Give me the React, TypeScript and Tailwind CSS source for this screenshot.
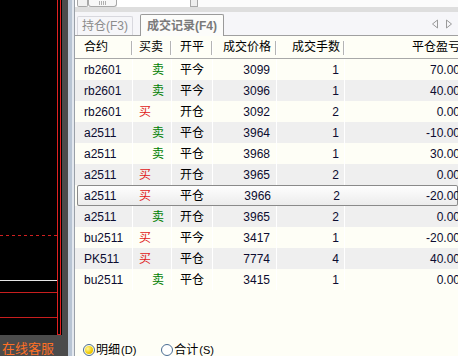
import React from 'react';

type Trade = {
  code: string;
  side: '买' | '卖';
  oc: string;
  price: string;
  qty: string;
  pnl: string;
};

const trades: Trade[] = [
  { code: 'rb2601', side: '卖', oc: '平今', price: '3099', qty: '1', pnl: '70.00' },
  { code: 'rb2601', side: '卖', oc: '平今', price: '3096', qty: '1', pnl: '40.00' },
  { code: 'rb2601', side: '买', oc: '开仓', price: '3092', qty: '2', pnl: '0.00' },
  { code: 'a2511', side: '卖', oc: '平仓', price: '3964', qty: '1', pnl: '-10.00' },
  { code: 'a2511', side: '卖', oc: '平仓', price: '3968', qty: '1', pnl: '30.00' },
  { code: 'a2511', side: '买', oc: '开仓', price: '3965', qty: '2', pnl: '0.00' },
  { code: 'a2511', side: '买', oc: '平仓', price: '3966', qty: '2', pnl: '-20.00' },
  { code: 'a2511', side: '卖', oc: '开仓', price: '3965', qty: '2', pnl: '0.00' },
  { code: 'bu2511', side: '买', oc: '平今', price: '3417', qty: '1', pnl: '-20.00' },
  { code: 'PK511', side: '买', oc: '平仓', price: '7774', qty: '4', pnl: '40.00' },
  { code: 'bu2511', side: '卖', oc: '平仓', price: '3415', qty: '1', pnl: '0.00' },
];

const SELECTED = 6;

const ChartStub: React.FC = () => (
  <svg width="62" height="335" className="block bg-black">
    <line x1="57.5" y1="0" x2="57.5" y2="334.5" stroke="#e02020" />
    <line x1="60.5" y1="0" x2="60.5" y2="334.5" stroke="#e02020" />
    <line x1="57" y1="334.5" x2="61" y2="334.5" stroke="#e02020" />
    <line x1="0" y1="235.5" x2="57" y2="235.5" stroke="#d02020" strokeDasharray="3 3" />
    <line x1="0" y1="280.5" x2="57" y2="280.5" stroke="#e6e6e6" />
    <line x1="0" y1="292.5" x2="57" y2="292.5" stroke="#c81e1e" />
    <line x1="0" y1="317.5" x2="57" y2="317.5" stroke="#c81e1e" />
  </svg>
);

const HeaderSep: React.FC = () => (
  <span className="absolute right-0 top-[5px] h-[14px] w-[2px] border-l border-[#b4b4b4] border-r border-r-white" />
);

const Radio: React.FC<{ checked?: boolean; label: string; hot: string }> = ({ checked, label, hot }) => (
  <div className="flex items-start">
    <span
      className={`h-[12px] w-[12px] rounded-full border border-[#4a6d93] flex items-center justify-center ${
        checked ? 'bg-[#fffce0]' : 'bg-white'
      }`}
    >
      {checked && (
        <span className="h-[8px] w-[8px] rounded-full bg-[radial-gradient(circle_at_35%_35%,#fff7a0,#f2cc00_60%,#d9a800)]" />
      )}
    </span>
    <span className="ml-[1px] text-[12px] leading-[12px] text-black">{label}</span>
    <span className="ml-[1px] text-[11px] leading-[12px] text-black">({hot})</span>
  </div>
);

export default function App() {
  return (
    <div className="flex h-[356px] w-[458px] overflow-hidden bg-black font-['Liberation_Sans','Noto_Sans_CJK_SC',sans-serif]">
      {/* chart stub on the left */}
      <div className="flex w-[62px] flex-col">
        <ChartStub />
        <div className="h-[21px] bg-[#4b4b4b] pl-[2px] pt-[7px] text-[13px] leading-none text-[#ff7025] whitespace-nowrap">
          在线客服
        </div>
      </div>
      <div className="w-[6px] bg-[#4b4b4b]" />
      <div className="w-[4px] bg-[#b9c5d4]" />
      <div className="w-[2px] bg-[#e3e8ef]" />
      <div className="w-px bg-[#9aa0a8]" />

      {/* trade panel */}
      <div className="flex min-w-0 flex-1 flex-col overflow-hidden bg-[#fefef6]">
        {/* clipped scrollbar */}
        <div className="flex h-[7px] bg-white">
          <div className="ml-[2px] h-[7px] w-[11px] rounded-b-[2px] border border-t-0 border-[#a8a8a8] bg-[#f2f2f2]" />
          <div className="h-[7px] w-[29px] rounded-b-[3px] border border-t-0 border-[#a8a8a8] bg-[#f8f8f8] flex justify-center gap-[1px] pt-[1px]">
            <span className="h-[4px] w-px bg-[#b0b0b0]" />
            <span className="h-[4px] w-px bg-[#b0b0b0]" />
            <span className="h-[4px] w-px bg-[#b0b0b0]" />
            <span className="h-[4px] w-px bg-[#b0b0b0]" />
          </div>
          <div className="ml-[73px] h-[7px] w-[8px] border border-t-0 border-[#a8a8a8] bg-[#eeeeee]" />
          <div className="flex-1 bg-[#fbfbfb]" />
        </div>
        <div className="h-[5px] bg-[#dedede]" />

        {/* tabs */}
        <div className="flex h-[24px] items-end border-b border-[#a0a0a0] bg-[#f6f6f9]">
          <div className="ml-[2px] flex h-[19px] w-[56px] items-center justify-center rounded-t-[2px] border border-b-0 border-[#d8d8de] text-[12px] text-[#8c8c8c]">
            持仓(F3)
          </div>
          <div className="-mb-px ml-[7px] flex h-[22px] w-[84px] items-center justify-center rounded-t-[2px] border border-b-0 border-[#9a9a9a] bg-[#fcfcfa] text-[12px] font-bold text-[#7a7a7a]">
            成交记录(F4)
          </div>
          <div className="ml-auto mr-[5px] flex h-[22px] items-center gap-[6px]">
            <svg width="8" height="10" viewBox="0 0 8 10">
              <path d="M6.5 1 L1.5 5 L6.5 9 Z" fill="none" stroke="#9a9a9a" />
            </svg>
            <svg width="8" height="10" viewBox="0 0 8 10">
              <path d="M1.5 1 L6.5 5 L1.5 9 Z" fill="none" stroke="#9a9a9a" />
            </svg>
          </div>
        </div>

        {/* header */}
        <div className="flex h-[23px] items-center border-b border-[#a8a8a8] text-[12px] text-black whitespace-nowrap">
          <div className="relative h-full w-[58px] shrink-0 pl-[9px] leading-[23px]">合约<HeaderSep /></div>
          <div className="relative h-full w-[39px] shrink-0 pl-[6px] leading-[23px]">买卖<HeaderSep /></div>
          <div className="relative h-full w-[41px] shrink-0 pl-[8px] leading-[23px]">开平<HeaderSep /></div>
          <div className="relative h-full w-[64px] shrink-0 pr-[6px] text-right leading-[23px]">成交价格<HeaderSep /></div>
          <div className="relative h-full w-[68px] shrink-0 pr-[5px] text-right leading-[23px]">成交手数<HeaderSep /></div>
          <div className="h-full w-[116px] shrink-0 pr-[1px] text-right leading-[23px]">平仓盈亏</div>
        </div>

        {/* rows */}
        <div className="flex flex-col text-[12px] text-[#0c0c30] whitespace-nowrap">
          {trades.map((t, i) => {
            const sel = i === SELECTED;
            const gray = i % 2 === 1;
            const cell = sel ? '' : 'border-r border-white';
            return (
              <div
                key={i}
                className={`flex h-[21px] items-stretch ${
                  sel
                    ? 'rounded-[2px] bg-[linear-gradient(#ffffff,#ebebeb)] shadow-[inset_0_0_0_1px_#8a8a8a] ml-[2px]'
                    : gray
                    ? 'bg-[#efefef]'
                    : ''
                }`}
              >
                <div className={`flex shrink-0 items-center ${sel ? 'w-[56px] pl-[7px]' : 'w-[58px] pl-[9px]'} ${cell}`}>
                  {t.code}
                </div>
                <div
                  className={`flex w-[39px] shrink-0 items-center ${cell} ${
                    t.side === '买' ? 'pl-[6px] text-[#e01818]' : 'pl-[19px] text-[#008000]'
                  }`}
                >
                  {t.side}
                </div>
                <div className={`flex w-[41px] shrink-0 items-center pl-[8px] text-black ${cell}`}>{t.oc}</div>
                <div className={`flex w-[64px] shrink-0 items-center justify-end pr-[6px] ${cell}`}>{t.price}</div>
                <div className={`flex w-[68px] shrink-0 items-center justify-end pr-[5px] ${cell}`}>{t.qty}</div>
                <div className="flex w-[116px] shrink-0 items-center justify-end pr-[1px]">{t.pnl}</div>
              </div>
            );
          })}
        </div>

        <div className="flex-1" />

        {/* detail / summary switch */}
        <div className="flex h-[12px] items-start overflow-visible pl-[8px]">
          <Radio checked label="明细" hot="D" />
          <div className="ml-[25px]">
            <Radio label="合计" hot="S" />
          </div>
        </div>
      </div>
    </div>
  );
}
